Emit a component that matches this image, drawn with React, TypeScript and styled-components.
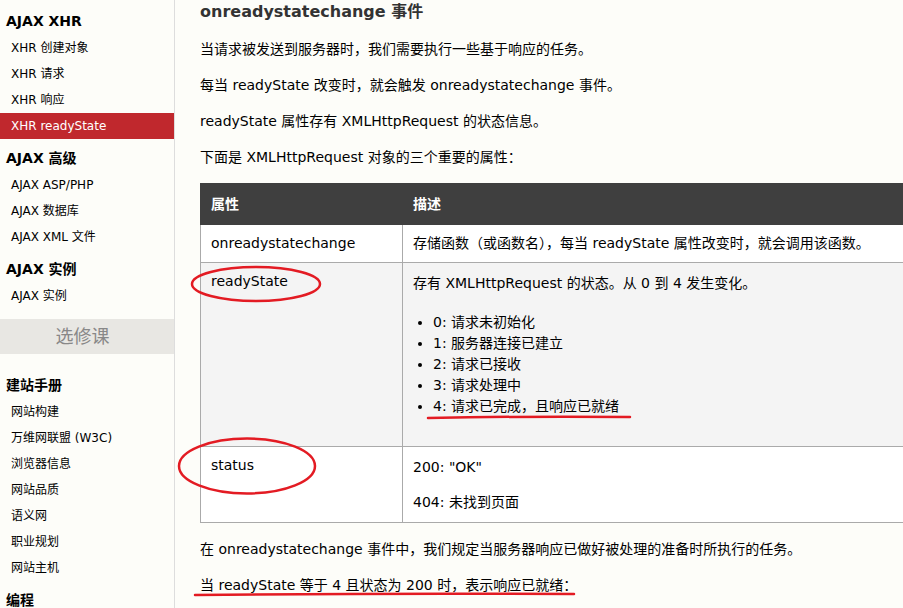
import styled, { createGlobalStyle } from "styled-components";

const GlobalStyle = createGlobalStyle`
  html, body {
    margin: 0;
    padding: 0;
    background: #fdfdf9;
    overflow: hidden;
  }
  body {
    font-family: "DejaVu Sans", "Noto Sans CJK SC", sans-serif;
    color: #000;
  }
`;

const Page = styled.div`
  position: relative;
  display: flex;
  width: 903px;
  height: 608px;
  overflow: hidden;
`;

const Sidebar = styled.nav`
  flex: 0 0 175px;
  height: 100%;
  padding-top: 2px;
  box-sizing: border-box;
  border-right: 1px solid #ddd;
`;

const SideHeading = styled.h2`
  margin: 0;
  padding: 8px 0 3px 6px;
  font-size: 14px;
  line-height: 22px;
  font-weight: bold;
`;

const SideLink = styled.a<{ $active?: boolean }>`
  display: block;
  height: 26px;
  line-height: 26px;
  padding-left: 11px;
  font-size: 12px;
  white-space: nowrap;
  color: ${(p) => (p.$active ? "#fff" : "#000")};
  background: ${(p) => (p.$active ? "#c0282d" : "transparent")};
  text-decoration: none;
`;

const Elective = styled.div`
  margin: 10px 0 12px;
  height: 35px;
  line-height: 35px;
  padding-right: 9px;
  background: #e8e7e3;
  color: #888;
  font-size: 18px;
  text-align: center;
`;

const Main = styled.main`
  flex: 0 0 auto;
  width: 730px;
  padding-left: 25px;
`;

const Title = styled.h1`
  margin: 0 0 15px;
  font-size: 16px;
  line-height: 24px;
  font-weight: bold;
  color: #333;
  white-space: nowrap;
`;

const Para = styled.p`
  margin: 0 0 16px;
  font-size: 14px;
  line-height: 20px;
  white-space: nowrap;
`;

const Table = styled.table`
  width: 100%;
  margin: 0 0 16px;
  border-collapse: collapse;
  table-layout: fixed;
  font-size: 14px;
`;

const Th = styled.th<{ $width?: number }>`
  width: ${(p) => (p.$width ? `${p.$width}px` : "auto")};
  padding: 10px;
  line-height: 20px;
  text-align: left;
  font-weight: bold;
  color: #fff;
  background: #3f3f3f;
  border: 1px solid #3f3f3f;
`;

const Td = styled.td<{ $shade?: boolean }>`
  padding: 10px;
  line-height: 17px;
  vertical-align: top;
  white-space: nowrap;
  overflow: hidden;
  border: 1px solid #aaa;
  background: ${(p) => (p.$shade ? "#f4f4f4" : "#fff")};

  p {
    margin: 0 0 15px;
    line-height: 20px;
  }
  p:last-child {
    margin-bottom: 0;
  }
  ul {
    margin: 19px 0;
    padding-left: 20px;
  }
  li {
    line-height: 21px;
  }
`;

const Marks = styled.svg`
  position: absolute;
  top: 0;
  left: 0;
  pointer-events: none;
`;

type NavItem = { label: string; active?: boolean };
type NavGroup = { title: string; items: NavItem[] };

const topGroups: NavGroup[] = [
  {
    title: "AJAX XHR",
    items: [
      { label: "XHR 创建对象" },
      { label: "XHR 请求" },
      { label: "XHR 响应" },
      { label: "XHR readyState", active: true },
    ],
  },
  {
    title: "AJAX 高级",
    items: [{ label: "AJAX ASP/PHP" }, { label: "AJAX 数据库" }, { label: "AJAX XML 文件" }],
  },
  { title: "AJAX 实例", items: [{ label: "AJAX 实例" }] },
];

const bottomGroups: NavGroup[] = [
  {
    title: "建站手册",
    items: [
      { label: "网站构建" },
      { label: "万维网联盟 (W3C)" },
      { label: "浏览器信息" },
      { label: "网站品质" },
      { label: "语义网" },
      { label: "职业规划" },
      { label: "网站主机" },
    ],
  },
  { title: "编程", items: [] },
];

const states = [
  "0: 请求未初始化",
  "1: 服务器连接已建立",
  "2: 请求已接收",
  "3: 请求处理中",
  "4: 请求已完成，且响应已就绪",
];

function Groups({ groups }: { groups: NavGroup[] }) {
  return (
    <div>
      {groups.map((g) => (
        <div key={g.title}>
          <SideHeading>{g.title}</SideHeading>
          {g.items.map((it) => (
            <SideLink key={it.label} $active={it.active}>
              {it.label}
            </SideLink>
          ))}
        </div>
      ))}
    </div>
  );
}

export default function App() {
  return (
    <Page>
      <GlobalStyle />
      <Sidebar>
        <Groups groups={topGroups} />
        <Elective>选修课</Elective>
        <Groups groups={bottomGroups} />
      </Sidebar>

      <Main>
        <Title>onreadystatechange 事件</Title>
        <Para>当请求被发送到服务器时，我们需要执行一些基于响应的任务。</Para>
        <Para>每当 readyState 改变时，就会触发 onreadystatechange 事件。</Para>
        <Para>readyState 属性存有 XMLHttpRequest 的状态信息。</Para>
        <Para>下面是 XMLHttpRequest 对象的三个重要的属性：</Para>

        <Table>
          <thead>
            <tr>
              <Th $width={181}>属性</Th>
              <Th>描述</Th>
            </tr>
          </thead>
          <tbody>
            <tr>
              <Td>onreadystatechange</Td>
              <Td>存储函数（或函数名），每当 readyState 属性改变时，就会调用该函数。</Td>
            </tr>
            <tr>
              <Td $shade>readyState</Td>
              <Td $shade>
                <p>存有 XMLHttpRequest 的状态。从 0 到 4 发生变化。</p>
                <ul>
                  {states.map((s) => (
                    <li key={s}>{s}</li>
                  ))}
                </ul>
              </Td>
            </tr>
            <tr>
              <Td>status</Td>
              <Td>
                <p>200: "OK"</p>
                <p>404: 未找到页面</p>
              </Td>
            </tr>
          </tbody>
        </Table>

        <Para>在 onreadystatechange 事件中，我们规定当服务器响应已做好被处理的准备时所执行的任务。</Para>
        <Para>当 readyState 等于 4 且状态为 200 时，表示响应已就绪：</Para>
      </Main>

      <Marks width={903} height={608} viewBox="0 0 903 608">
        <g fill="none" stroke="#e31b23" strokeWidth={2.5} strokeLinecap="round">
          <ellipse cx={256} cy={284} rx={64} ry={17} />
          <ellipse cx={247} cy={466} rx={68} ry={27.5} />
          <path d="M428 418 Q530 416 630 417" />
          <path d="M195 595 Q385 593 574 594" />
        </g>
      </Marks>
    </Page>
  );
}
